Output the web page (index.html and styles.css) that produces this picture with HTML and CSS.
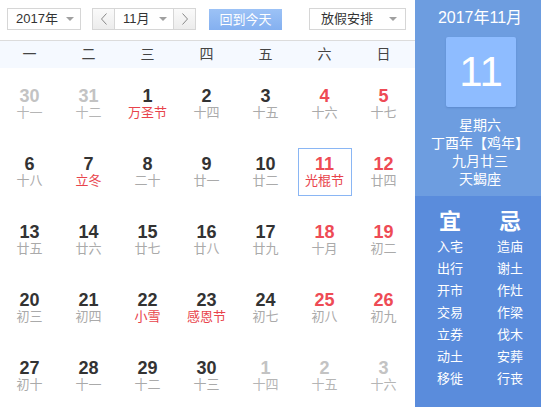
FILE: index.html
```html
<!DOCTYPE html>
<html lang="zh">
<head>
<meta charset="utf-8">
<link rel="stylesheet" href="styles.css">
</head>
<body>
<div class="app">
  <div class="main">
    <div class="toolbar">
      <div class="select year"><span>2017年</span><i class="tri"></i></div>
      <div class="month-group">
        <div class="navbtn"><svg width="8" height="12" viewBox="0 0 8 12"><polyline points="6.5,0.5 1.5,6 6.5,11.5" fill="none" stroke="#888" stroke-width="1"/></svg></div>
        <div class="select month"><span>11月</span><i class="tri"></i></div>
        <div class="navbtn"><svg width="8" height="12" viewBox="0 0 8 12"><polyline points="1.5,0.5 6.5,6 1.5,11.5" fill="none" stroke="#888" stroke-width="1"/></svg></div>
      </div>
      <div class="today-btn">回到今天</div>
      <div class="select holiday"><span>放假安排</span><i class="tri"></i></div>
    </div>
    <div class="weekdays">
      <span>一</span><span>二</span><span>三</span><span>四</span><span>五</span><span>六</span><span>日</span>
    </div>
    <div class="grid">
      <div class="cell other"><b>30</b><em>十一</em></div>
      <div class="cell other"><b>31</b><em>十二</em></div>
      <div class="cell fest"><b>1</b><em>万圣节</em></div>
      <div class="cell"><b>2</b><em>十四</em></div>
      <div class="cell"><b>3</b><em>十五</em></div>
      <div class="cell wk"><b>4</b><em>十六</em></div>
      <div class="cell wk"><b>5</b><em>十七</em></div>

      <div class="cell"><b>6</b><em>十八</em></div>
      <div class="cell fest"><b>7</b><em>立冬</em></div>
      <div class="cell"><b>8</b><em>二十</em></div>
      <div class="cell"><b>9</b><em>廿一</em></div>
      <div class="cell"><b>10</b><em>廿二</em></div>
      <div class="cell wk fest today"><b>11</b><em>光棍节</em></div>
      <div class="cell wk"><b>12</b><em>廿四</em></div>

      <div class="cell"><b>13</b><em>廿五</em></div>
      <div class="cell"><b>14</b><em>廿六</em></div>
      <div class="cell"><b>15</b><em>廿七</em></div>
      <div class="cell"><b>16</b><em>廿八</em></div>
      <div class="cell"><b>17</b><em>廿九</em></div>
      <div class="cell wk"><b>18</b><em>十月</em></div>
      <div class="cell wk"><b>19</b><em>初二</em></div>

      <div class="cell"><b>20</b><em>初三</em></div>
      <div class="cell"><b>21</b><em>初四</em></div>
      <div class="cell fest"><b>22</b><em>小雪</em></div>
      <div class="cell fest"><b>23</b><em>感恩节</em></div>
      <div class="cell"><b>24</b><em>初七</em></div>
      <div class="cell wk"><b>25</b><em>初八</em></div>
      <div class="cell wk"><b>26</b><em>初九</em></div>

      <div class="cell"><b>27</b><em>初十</em></div>
      <div class="cell"><b>28</b><em>十一</em></div>
      <div class="cell"><b>29</b><em>十二</em></div>
      <div class="cell"><b>30</b><em>十三</em></div>
      <div class="cell other"><b>1</b><em>十四</em></div>
      <div class="cell other"><b>2</b><em>十五</em></div>
      <div class="cell other"><b>3</b><em>十六</em></div>
    </div>
  </div>
  <div class="side">
    <div class="side-top">
      <div class="ym">2017年11月</div>
      <div class="bigday">11</div>
      <div class="info">
        <div>星期六</div>
        <div>丁酉年【鸡年】</div>
        <div>九月廿三</div>
        <div>天蝎座</div>
      </div>
    </div>
    <div class="side-bottom">
      <div class="col">
        <div class="head">宜</div>
        <div>入宅</div><div>出行</div><div>开市</div><div>交易</div><div>立券</div><div>动土</div><div>移徙</div>
      </div>
      <div class="col">
        <div class="head">忌</div>
        <div>造庙</div><div>谢土</div><div>作灶</div><div>作梁</div><div>伐木</div><div>安葬</div><div>行丧</div>
      </div>
    </div>
  </div>
</div>
</body>
</html>
```

FILE: styles.css
```css
html, body {
  margin: 0;
  padding: 0;
  overflow: hidden;
}
body {
  width: 541px;
  height: 407px;
  background: #fff;
  font-family: "Liberation Sans", "Noto Sans CJK SC", sans-serif;
  color: #333;
}
.app {
  display: flex;
  width: 541px;
  height: 407px;
}
.main {
  width: 415px;
  flex: none;
}
.toolbar {
  height: 40px;
  display: flex;
  align-items: flex-start;
  padding-top: 8px;
  box-sizing: border-box;
  padding-left: 7px;
}
.select {
  box-sizing: border-box;
  height: 22px;
  border: 1px solid #d6d6d6;
  background: #fff;
  display: flex;
  align-items: center;
  justify-content: space-between;
  font-size: 13px;
  color: #333;
}
.select span {
  line-height: 20px;
}
.tri {
  width: 0;
  height: 0;
  border-left: 4px solid transparent;
  border-right: 4px solid transparent;
  border-top: 4px solid #a0a0a0;
}
.year {
  width: 74px;
  padding: 0 6px 0 8px;
}
.month-group {
  display: flex;
  margin-left: 11px;
}
.navbtn {
  box-sizing: border-box;
  width: 23px;
  height: 22px;
  border: 1px solid #d6d6d6;
  background: linear-gradient(#fafafa, #ececec);
  display: flex;
  align-items: center;
  justify-content: center;
}
.month {
  width: 58px;
  border-left: none;
  border-right: none;
  padding: 0 6px 0 8px;
}
.today-btn {
  margin-left: 13px;
  margin-top: 1px;
  width: 73px;
  height: 21px;
  box-sizing: border-box;
  background: linear-gradient(#9cc2f6, #84b0f0);
  color: #fff;
  font-size: 13px;
  line-height: 21px;
  text-align: center;
}
.holiday {
  margin-left: 27px;
  width: 97px;
  padding: 0 8px 0 11px;
}
.weekdays {
  border-top: 1px solid #dcdcdc;
  background: #f5f9ff;
  height: 27px;
  display: grid;
  grid-template-columns: repeat(7, 59px);
  align-items: center;
  font-size: 14px;
  color: #444;
}
.weekdays span {
  text-align: center;
  line-height: 27px;
}
.grid {
  padding-top: 2px;
  display: grid;
  grid-template-columns: repeat(7, 59px);
  grid-auto-rows: 68px;
  justify-items: center;
  align-items: center;
}
.cell {
  box-sizing: border-box;
  width: 54px;
  height: 48px;
  display: flex;
  flex-direction: column;
  align-items: center;
  padding-top: 6px;
  border: 1px solid transparent;
}
.cell b {
  font-size: 18px;
  font-weight: bold;
  line-height: 20px;
  color: #333;
  margin-top: -1px;
}
.cell em {
  font-style: normal;
  font-size: 13px;
  line-height: 14px;
  color: #aaa;
}
.cell.wk b {
  color: #ee4b55;
}
.cell.fest em {
  color: #e8434b;
}
.cell.other b {
  color: #c3c3c3;
}
.cell.other em {
  color: #b5b5b5;
}
.cell.today {
  border-color: #8ab6f4;
}
.side {
  width: 126px;
  flex: none;
  color: #fff;
  display: flex;
  flex-direction: column;
}
.side-top {
  height: 196px;
  background: #6d9de0;
  padding-left: 4px;
  display: flex;
  flex-direction: column;
  align-items: center;
}
.ym {
  margin-top: 8px;
  font-size: 16px;
  line-height: 20px;
}
.bigday {
  margin-top: 9px;
  margin-left: 2px;
  width: 70px;
  height: 70px;
  background: #8ebcff;
  border-radius: 2px;
  box-shadow: 0 1px 2px rgba(40, 80, 150, 0.25);
  font-size: 42px;
  line-height: 70px;
  text-align: center;
  color: #fff;
}
.info {
  margin-top: 9px;
  font-size: 14px;
  line-height: 18px;
  text-align: center;
}
.side-bottom {
  flex: 1;
  background: #5a8cdc;
  padding-left: 4px;
  display: flex;
  justify-content: center;
  padding-top: 12px;
}
.col {
  width: 60px;
  text-align: center;
  font-size: 13px;
  line-height: 22px;
}
.col .head {
  font-size: 22px;
  font-weight: bold;
  line-height: 28px;
}
```
